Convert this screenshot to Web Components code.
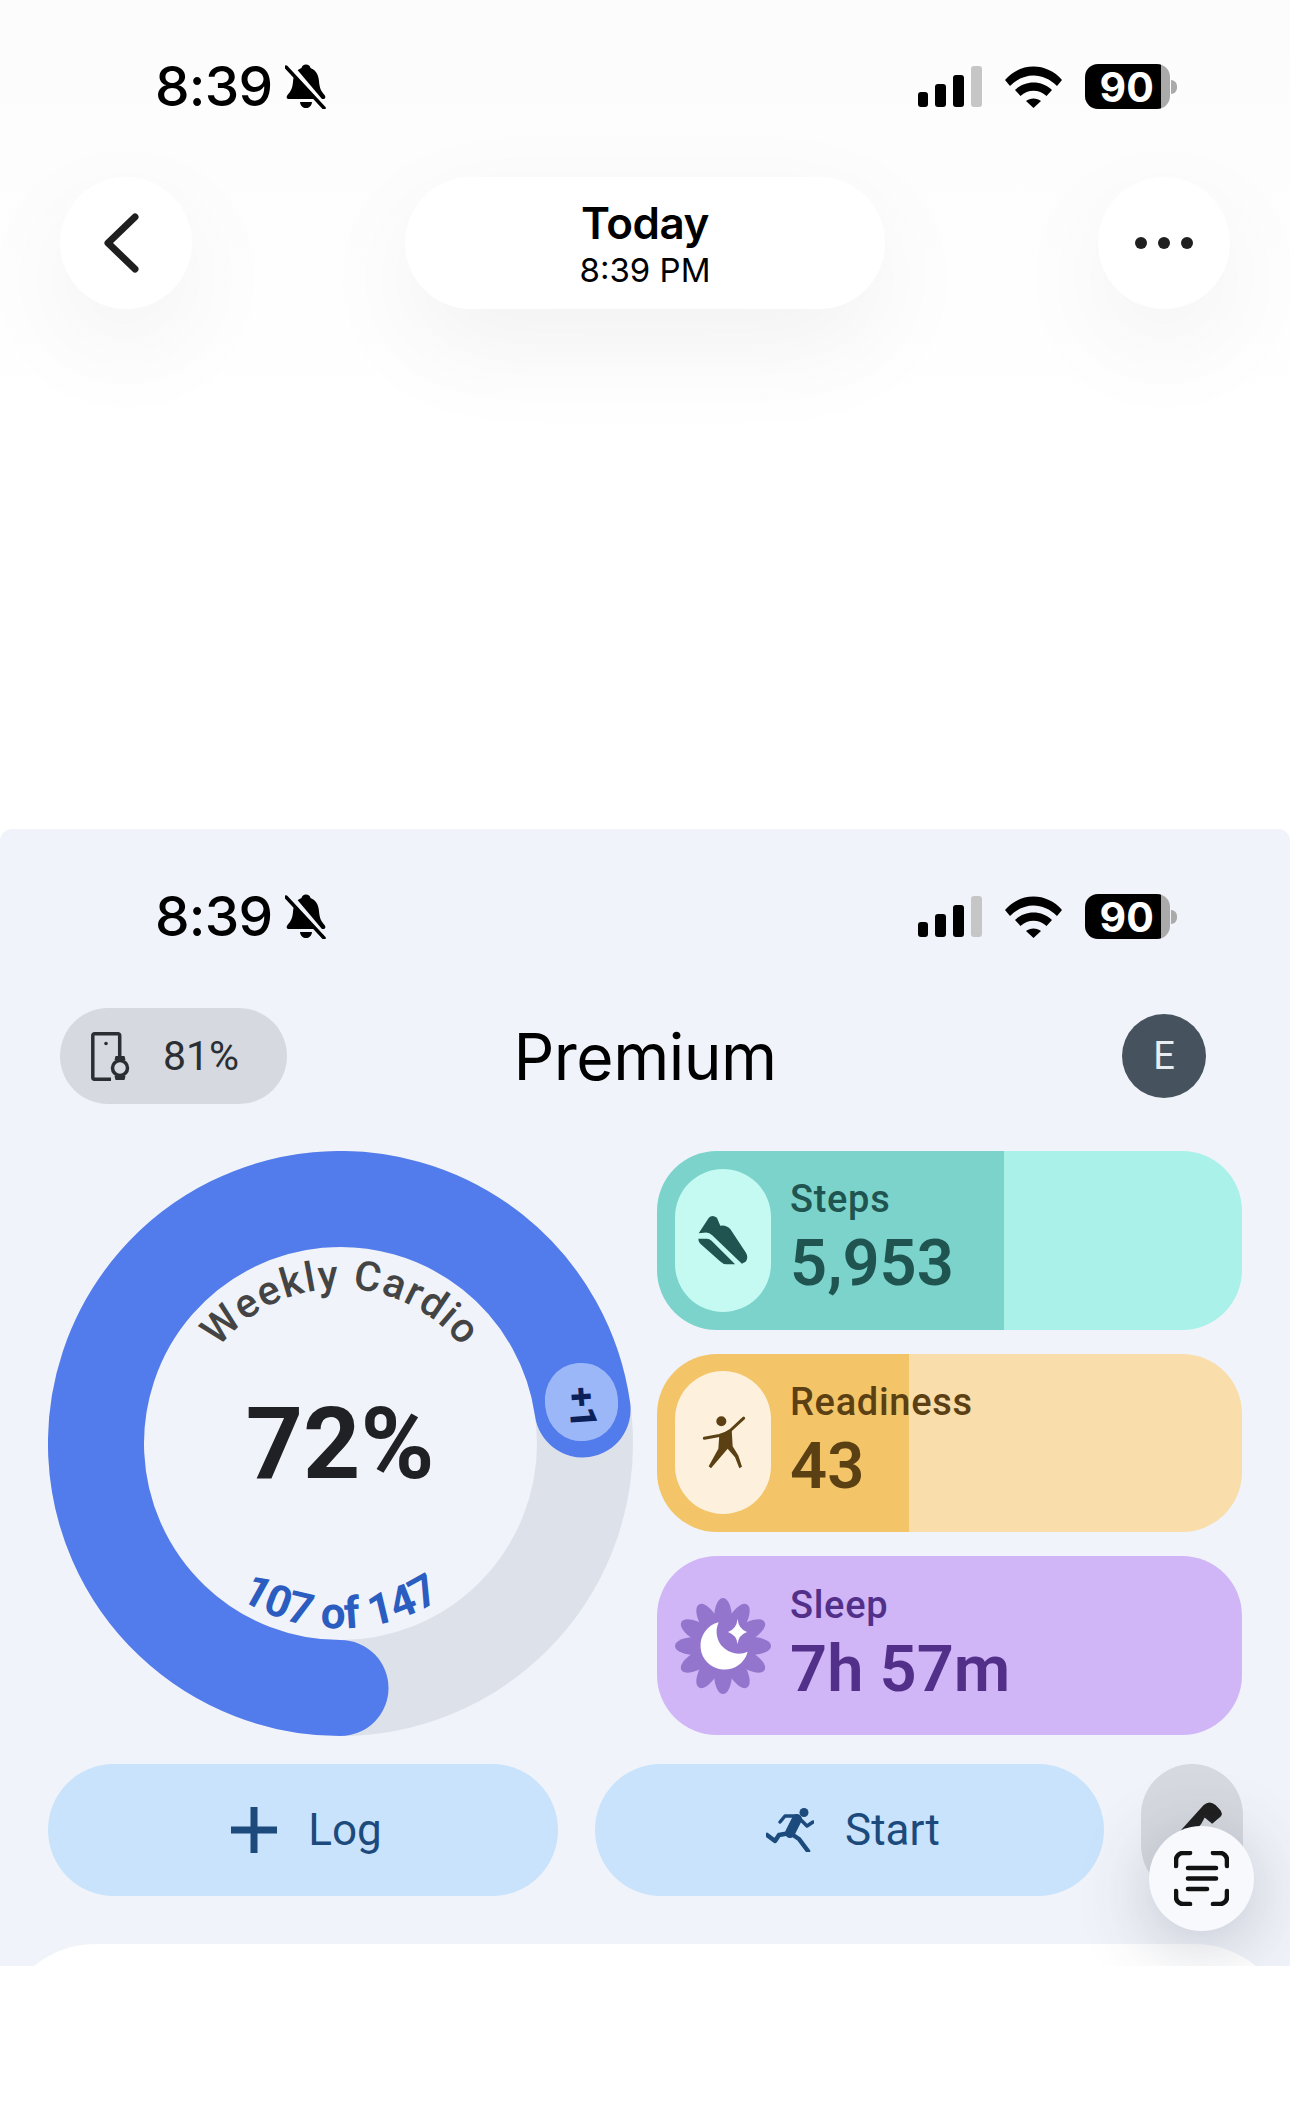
<!DOCTYPE html>
<html lang="en">
<head>
<meta charset="utf-8">
<title>Today</title>
<style>
  html, body { margin: 0; background: #fff; height: 2110px; overflow: hidden; }
  body { font-family: Roboto, "Liberation Sans", sans-serif; }
</style>
</head>
<body>
<app-screen>
  <top-section></top-section>
  <premium-panel>
    <status-bar style="--gap:#f0f3f9"></status-bar>
    <panel-head></panel-head>
    <summary-row>
      <cardio-ring></cardio-ring>
      <metric-card style="--fill:#7bd3cb;--track:#a9f1e9;--ink:#1f5450;--pill:#c5faf3;--pct:59.3%">
        <svg slot="icon" width="54" height="54" viewBox="110 190 160 160"><path fill="#1f5450" d="M118 250 148 204Q158 194 172 204L182 228Q198 224 212 238L258 308Q266 322 258 334L246 340 158 256Q150 248 140 248Z"/><path fill="#1f5450" d="M117 266H142Q150 266 156 272L226 342H200Q190 342 182 334L122 280Q116 272 117 266Z"/></svg>
        <span slot="label">Steps</span>
        <span slot="value">5,953</span>
      </metric-card>
      <metric-card style="--fill:#f3c568;--track:#f9ddab;--ink:#5b4013;--pill:#fdf1de;--pct:43%">
        <svg slot="icon" width="45" height="62" viewBox="120 160 135 185"><circle cx="181" cy="187" r="15" fill="#5b4013"/><path fill="none" stroke="#5b4013" stroke-width="9" stroke-linecap="round" stroke-linejoin="round" d="M248 178 208 215Q195 225 175 230L130 238"/><path fill="#5b4013" d="M175 228 212 212 215 262 232 290 243 324 235 328 222 295 200 270 150 328 143 322 172 270Z"/></svg>
        <span slot="label">Readiness</span>
        <span slot="value">43</span>
      </metric-card>
      <metric-card style="--fill:#d0b6f6;--track:#d0b6f6;--ink:#52308a;--pill:transparent;--pct:0%">
        <sleep-flower slot="icon"></sleep-flower>
        <span slot="label">Sleep</span>
        <span slot="value">7h 57m</span>
      </metric-card>
    </summary-row>
    <action-row></action-row>
    <white-sheet></white-sheet>
    <scan-button></scan-button>
  </premium-panel>
</app-screen>

<script>
// small helper so every element gets its open shadow root
function defineEl(name, html) {
  customElements.define(name, class extends HTMLElement {
    constructor() {
      super();
      this.attachShadow({ mode: "open" }).innerHTML = html;
    }
  });
}

defineEl("app-screen", `
  <style>:host { display: block; width: 1290px; height: 2110px; overflow: hidden; background: #fff; }</style>
  <slot></slot>
`);

defineEl("status-bar", `
  <style>
    :host { display: flex; align-items: center; justify-content: space-between; height: 45px; padding: 0 113px 0 155px; color: #000; font-family: Inter, sans-serif; }
    .left, .right { display: flex; align-items: center; }
    .left { gap: 13px; }
    .right { gap: 23px; }
    .time { font-size: 55px; font-weight: 500; line-height: 45px; letter-spacing: -.8px; }
    .batt { display: flex; align-items: center; }
    .body { width: 85.5px; height: 45px; border-radius: 13px; background: linear-gradient(to right, #000 90%, #aaa 90%); display: flex; align-items: center; justify-content: center; box-sizing: border-box; padding-right: 1px; color: #fff; font-size: 41px; font-weight: 700; }
    .nub { width: 6px; height: 14px; margin-left: 1px; border-radius: 0 7px 7px 0; background: #aaa; }
  </style>
  <div class="left">
    <span class="time">8:39</span>
    <svg width="42" height="45" viewBox="0 0 42 45">
      <path d="M21 .5C23.5 .5 25 2 25.5 4 31 6 33.5 11 34 17 34.5 24 36 27 39.5 31 41 33 40.5 35 38 35H4C1.5 35 1 33 2.5 31 6 27 7.5 24 8 18 8.5 11 11 6 16.5 4 17 2 18.5 .5 21 .5Z"/>
      <path d="M15 38H27C26.5 42 24 44 21 44 18 44 15.5 42 15 38Z"/>
      <path d="M5 1 42 45" stroke="var(--gap,#fdfdfd)" stroke-width="5"/>
      <path d="M1 3 39 44" stroke="#000" stroke-width="3.5" stroke-linecap="round"/>
    </svg>
  </div>
  <div class="right">
    <svg width="64" height="41" viewBox="0 0 64 41">
      <rect x="0" y="26" width="10" height="15" rx="3"/>
      <rect x="17" y="18" width="11" height="23" rx="3"/>
      <rect x="35" y="9" width="11" height="32" rx="3"/>
      <rect x="53" y="0" width="11" height="41" rx="3" fill="#c6c6c6"/>
    </svg>
    <svg width="57" height="42" viewBox="0 0 57 42">
      <path d="M0 14C15-4 42-4 57 14L52 20C38 6 19 6 5 20Z"/>
      <path d="M10 24C20 14 37 14 47 24L41.5 30C34 23 23 23 15.5 30Z"/>
      <path d="M21 35C25 31.5 32 31.5 36 35L28.5 42Z"/>
    </svg>
    <div class="batt"><div class="body">90</div><div class="nub"></div></div>
  </div>
`);

defineEl("top-section", `
  <style>
    :host { display: block; height: 829px; box-sizing: border-box; padding-top: 64px; background: linear-gradient(#fcfcfc, #fff 440px); }
    nav { display: flex; justify-content: space-between; margin: 68px 60px 0; }
    .btn { width: 132px; height: 132px; border-radius: 50%; background: #fff; display: flex; align-items: center; justify-content: center; box-shadow: 0 36px 110px rgba(0,0,0,.055); }
    .back svg { margin-left: -8px; }
    .title { width: 480px; height: 132px; border-radius: 66px; background: #fff; box-shadow: 0 36px 110px rgba(0,0,0,.055); display: flex; flex-direction: column; align-items: center; justify-content: center; gap: 2px; padding-top: 2px; box-sizing: border-box; font-family: Inter, sans-serif; color: #000; }
    .title b { font-size: 44px; font-weight: 600; line-height: 50px; letter-spacing: -.5px; }
    .title span { font-size: 33px; font-weight: 400; line-height: 40px; }
  </style>
  <status-bar></status-bar>
  <nav>
    <div class="btn back">
      <svg width="40" height="62" viewBox="0 0 40 62"><path d="M33 7 6 33 33 59" transform="translate(0,-2)" fill="none" stroke="#1f1f1f" stroke-width="7" stroke-linecap="round" stroke-linejoin="round"/></svg>
    </div>
    <div class="title"><b>Today</b><span>8:39 PM</span></div>
    <div class="btn">
      <svg width="60" height="14" viewBox="0 0 60 14"><circle cx="7" cy="7" r="6" fill="#1f1f1f"/><circle cx="30" cy="7" r="6" fill="#1f1f1f"/><circle cx="53" cy="7" r="6" fill="#1f1f1f"/></svg>
    </div>
  </nav>
`);

defineEl("premium-panel", `
  <style>
    :host { display: block; position: relative; height: 1137px; box-sizing: border-box; padding-top: 65px; background: #f0f3f9; border-radius: 12px 12px 0 0; overflow: hidden; }
  </style>
  <slot></slot>
`);

defineEl("panel-head", `
  <style>
    :host { display: grid; grid-template-columns: 1fr auto 1fr; align-items: center; height: 96px; margin: 69px 60px 0; }
    .pill { width: 227px; height: 96px; border-radius: 48px; background: #d6d9df; display: flex; align-items: center; gap: 33px; padding-left: 31px; box-sizing: border-box; font: 400 41px Roboto, sans-serif; color: #2b2f33; }
    h1 { margin: 0; font: 400 64px Inter, sans-serif; color: #000; letter-spacing: -.5px; }
    .avatar { justify-self: end; margin-right: 24px; width: 84px; height: 84px; border-radius: 50%; background: #46535f; color: #e8eef0; display: flex; align-items: center; justify-content: center; font: 400 38px Roboto, sans-serif; }
  </style>
  <div class="pill">
    <svg width="39" height="49" viewBox="0 0 39 49" fill="none" stroke="#2b2f33" stroke-width="3.5">
      <path d="M20 47.2H3.5A1.7 1.7 0 0 1 1.8 45.5V3.5A1.7 1.7 0 0 1 3.5 1.8H27A1.7 1.7 0 0 1 28.7 3.5V24"/>
      <circle cx="15" cy="11.5" r="1.8" fill="#2b2f33" stroke="none"/>
      <circle cx="29" cy="36" r="7.5"/>
      <path d="M23.5 28 24.5 24H33.5L34.5 28ZM23.5 44 24.5 48H33.5L34.5 44Z" fill="#2b2f33" stroke="none"/>
    </svg>
    <span>81%</span>
  </div>
  <h1>Premium</h1>
  <div class="avatar">E</div>
`);

defineEl("summary-row", `
  <style>
    :host { display: grid; grid-template-columns: 585px 585px; grid-template-rows: repeat(3, 1fr); column-gap: 24px; row-gap: 24px; height: 584px; margin: 47px 48px 0; }
    ::slotted(cardio-ring) { grid-row: 1 / 4; }
  </style>
  <slot></slot>
`);

defineEl("cardio-ring", `
  <style>
    :host { display: block; position: relative; width: 585px; height: 584px; }
    svg { display: block; }
    .label { font: 500 41px Roboto, sans-serif; fill: #444; letter-spacing: 1.5px; }
    .count { font: 700 44px Roboto, sans-serif; fill: #2b5cbf; }
    .pct { font: 700 100px Roboto, sans-serif; fill: #202124; }
    .bump { position: absolute; left: 497px; top: 212px; width: 73px; height: 78px; border-radius: 48%; background: #9cb7f8; transform: rotate(-6deg); display: flex; align-items: center; justify-content: center; }
    .bump span { display: block; transform: rotate(92deg); font: 800 37px Roboto, sans-serif; color: #0c1f58; line-height: 1; margin-top: 10px; }
  </style>
  <svg width="585" height="585" viewBox="0 0 585 585">
    <circle cx="292.5" cy="292.5" r="244.5" fill="none" stroke="#dde1e9" stroke-width="96"/>
    <path d="M292.5 537A244.5 244.5 0 1 1 534.6 258.5" fill="none" stroke="#527bec" stroke-width="96" stroke-linecap="round"/>
    <path id="topArc" d="M137.5 292.5A155 155 0 0 1 447.5 292.5" fill="none"/>
    <path id="botArc" d="M107.5 292.5A185 185 0 0 0 477.5 292.5" fill="none"/>
    <text class="label" text-anchor="middle"><textPath href="#topArc" startOffset="50%">Weekly Cardio</textPath></text>
    <text class="count" text-anchor="middle"><textPath href="#botArc" startOffset="50%">107 of 147</textPath></text>
    <text class="pct" x="292" y="327" text-anchor="middle">72%</text>
  </svg>
  <div class="bump"><span>+1</span></div>
`);

defineEl("metric-card", `
  <style>
    :host { display: flex; align-items: center; gap: 20px; padding-left: 18px; border-radius: 60px; overflow: hidden; color: var(--ink); background: linear-gradient(to right, var(--fill) var(--pct), var(--track) var(--pct)); }
    .pill { flex: none; width: 96px; height: 143px; border-radius: 48px; background: var(--pill); display: flex; align-items: center; justify-content: center; }
    .txt { display: flex; flex-direction: column; gap: 7px; margin-top: -9px; margin-left: -1px; }
    .lab { font: 500 38px/48px Roboto, sans-serif; letter-spacing: .7px; }
    .val { font: 600 65px/66px Roboto, sans-serif; }
  </style>
  <div class="pill"><slot name="icon"></slot></div>
  <div class="txt">
    <div class="lab"><slot name="label"></slot></div>
    <div class="val"><slot name="value"></slot></div>
  </div>
`);

const petals = Array.from({ length: 12 }, (_, i) =>
  `<path transform="rotate(${i * 30})" d="M0-48C6-48 10-36 9-20H-9C-10-36-6-48 0-48Z"/>`
).join("");
defineEl("sleep-flower", `
  <style>:host { display: block; width: 96px; height: 96px; } svg { display: block; }</style>
  <svg width="96" height="96" viewBox="-48 -48 96 96">
    <g fill="#9475cd">${petals}<circle r="28"/></g>
    <path fill="#fff" d="M-4.3-23.7A24 24 0 1 0 24.7 5.7 22 22 0 0 1-4.3-23.7Z"/>
    <path fill="#fff" d="M14.6-27Q15.5-17 24-14 15.5-11 14.6-2 13.5-11 5-14 13.5-17 14.6-27Z"/>
  </svg>
`);

defineEl("action-row", `
  <style>
    :host { display: grid; grid-template-columns: 510px 509px 102px; column-gap: 37px; height: 132px; margin: 29px 48px 0; }
    .b { border-radius: 66px; background: #c8e3fb; color: #1c4a7c; display: flex; align-items: center; justify-content: center; gap: 31px; padding-left: 7px; box-sizing: border-box; font: 400 44px Roboto, sans-serif; }
    .edit { background: #d6d9df; align-items: flex-start; padding: 36px 0 0 20px; }
  </style>
  <div class="b">
    <svg width="46" height="46" viewBox="0 0 46 46"><path d="M23 0V46M0 23H46" stroke="#1c4a7c" stroke-width="7"/></svg>
    <span>Log</span>
  </div>
  <div class="b">
    <svg width="48" height="44" viewBox="0 0 48 44" fill="none" stroke="#1c4a7c" stroke-linecap="round" stroke-linejoin="round">
      <circle cx="38" cy="4.5" r="4.5" fill="#1c4a7c" stroke="none"/>
      <path d="M31 11 24 25" stroke-width="10"/>
      <path d="M33 10 41 18 47 14" stroke-width="3.5"/>
      <path d="M31 8H19L14 14" stroke-width="3.5"/>
      <path d="M24 25 13 27 9 33 1 27" stroke-width="4.5"/>
      <path d="M24 25 33 31 42 43" stroke-width="4.5"/>
    </svg>
    <span>Start</span>
  </div>
  <div class="b edit">
    <svg width="48" height="44" viewBox="170 120 140 130"><path fill="#1f1f1f" d="M175 212 245 135Q262 120 280 135L292 147Q305 160 292 172L270 190 248 172 238 190 200 235Z"/></svg>
  </div>
`);

defineEl("white-sheet", `
  <style>:host { display: block; height: 200px; margin-top: 48px; background: #fff; border-radius: 95px 95px 0 0; }</style>
`);

defineEl("scan-button", `
  <style>
    :host { position: absolute; left: 1149px; top: 997px; width: 105px; height: 105px; border-radius: 50%; background: #f7f9fc; display: flex; align-items: center; justify-content: center; box-shadow: 0 14px 70px rgba(60,70,95,.28); }
  </style>
  <svg width="55" height="55" viewBox="0 0 55 55" fill="none" stroke="#111" stroke-width="4.6" stroke-linecap="round">
    <path d="M16 2H9A7 7 0 0 0 2 9V15"/>
    <path d="M39 2H46A7 7 0 0 1 53 9V15"/>
    <path d="M16 53H9A7 7 0 0 1 2 46V40"/>
    <path d="M39 53H46A7 7 0 0 0 53 46V40"/>
    <path d="M14 17H42M14 27.5H42M14 38H33"/>
  </svg>
`);
</script>
</body>
</html>
